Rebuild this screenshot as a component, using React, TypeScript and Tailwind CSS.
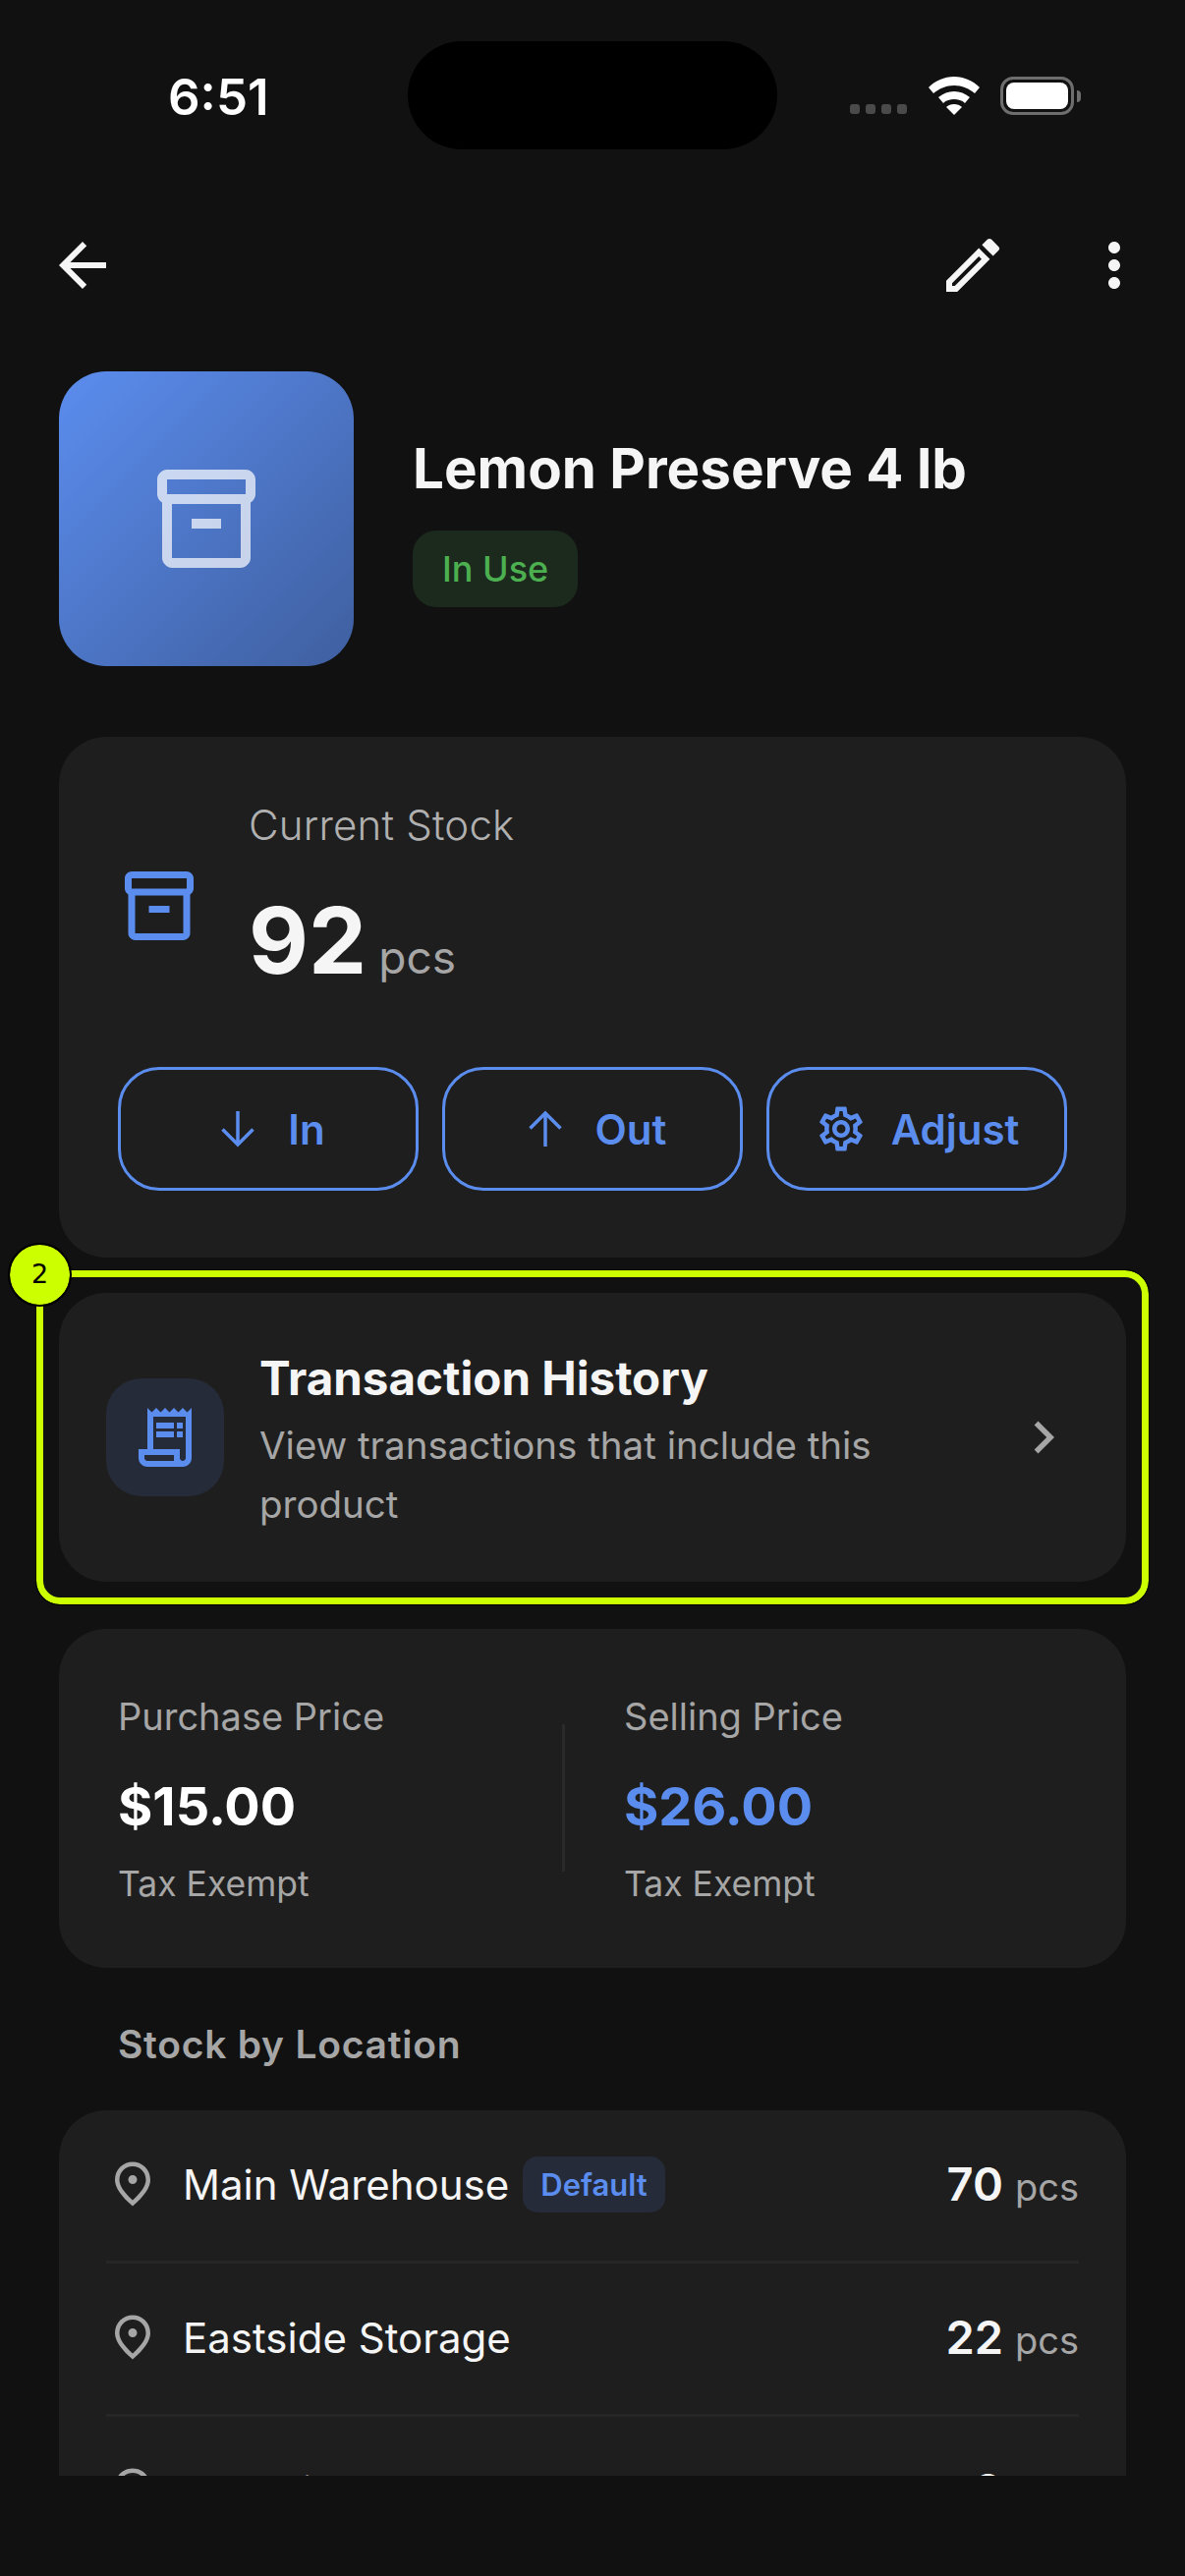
import { MdArrowBack, MdChevronRight, MdMoreVert, MdOutlineEdit, MdOutlineInventory2, MdOutlinePlace, MdOutlineReceiptLong, MdOutlineSettings } from "react-icons/md"

const locations = [
  { name: "Main Warehouse", qty: 70, isDefault: true },
  { name: "Eastside Storage", qty: 22, isDefault: false },
  { name: "Westside Annex", qty: 0, isDefault: false },
]

function StatusBar() {
  return (
    <div className="relative h-[152px] shrink-0">
      <span className="absolute left-[171px] top-[70px] text-[51px] leading-[58px] font-semibold text-white">6:51</span>
      <div className="absolute left-[415px] top-[42px] h-[110px] w-[376px] rounded-[55px] bg-black" />
      <div className="absolute left-[865px] top-[106px] flex gap-[6px]">
        {[0, 1, 2, 3].map((i) => (
          <span key={i} className="h-[10px] w-[10px] rounded-[3px] bg-[#4a4a4a]" />
        ))}
      </div>
      <svg className="absolute left-[945px] top-[78px]" width="52" height="39" viewBox="0 0 52 39" fill="#fff">
        <path d="M26 0C16 0 7 4 0 11l5 6c6-5 13-8 21-8s15 3 21 8l5-6C45 4 36 0 26 0z" />
        <path d="M26 15c-6 0-11 2-16 6l5 6c3-3 7-4 11-4s8 1 11 4l5-6c-5-4-10-6-16-6z" />
        <path d="M26 28c-3 0-6 1-8 3l8 8 8-8c-2-2-5-3-8-3z" />
      </svg>
      <div className="absolute left-[1018px] top-[78px] flex h-[39px] w-[75px] items-center justify-center rounded-[13px] border-[3px] border-[#6e6e6e]">
        <div className="h-[27px] w-[63px] rounded-[8px] bg-white" />
      </div>
      <div className="absolute left-[1096px] top-[92px] h-[12px] w-[4px] rounded-r-full bg-[#6e6e6e]" />
    </div>
  )
}

function ThinArrow({ up }: { up?: boolean }) {
  return (
    <svg width="54" height="54" viewBox="0 0 54 54" fill="none" stroke="currentColor" strokeWidth="3.5" className={up ? "rotate-180" : ""}>
      <path d="M27 9V43M11.5 27.5L27 43L42.5 27.5" />
    </svg>
  )
}

function ActionButton({ icon, label }: { icon: React.ReactNode; label: string }) {
  return (
    <button className="flex h-[126px] flex-1 items-center justify-center gap-[24px] rounded-[42px] border-[3px] border-[#5b8def] text-[42px] font-semibold text-[#5b8def]">
      {icon}
      {label}
    </button>
  )
}

function PriceColumn({ label, value, accent }: { label: string; value: string; accent?: boolean }) {
  return (
    <div className="flex flex-col">
      <span className="text-[38px] leading-[54px] text-[#a6a6a6]">{label}</span>
      <span className={`mt-[29px] text-[54px] leading-[72px] font-bold ${accent ? "text-[#5b8def]" : "text-white"}`}>{value}</span>
      <span className="mt-[19px] text-[35.5px] leading-[48px] text-[#a6a6a6]">Tax Exempt</span>
    </div>
  )
}

export default function App() {
  return (
    <div className="relative flex h-[2622px] w-[1206px] flex-col overflow-hidden bg-[#111111] font-['Inter',sans-serif] text-white">
      <StatusBar />

      {/* Top actions */}
      <div className="mt-[78px] flex h-[80px] shrink-0 items-center justify-between pl-[48px] pr-[36px]">
        <MdArrowBack size={72} className="text-[#f5f5f5]" />
        <div className="flex items-center gap-[72px]">
          <MdOutlineEdit size={72} className="text-[#f5f5f5]" />
          <MdMoreVert size={72} className="text-[#f5f5f5]" />
        </div>
      </div>

      {/* Scrolling content */}
      <div className="mt-[-4px] flex h-[2214px] flex-col overflow-hidden px-[60px] pt-[72px]">
        <div className="flex items-center gap-[60px]">
          <div className="flex h-[300px] w-[300px] shrink-0 items-center justify-center rounded-[48px] bg-gradient-to-br from-[#5b8def] to-[#3f5f9f]">
            <MdOutlineInventory2 size={120} className="text-white/70" />
          </div>
          <div className="flex flex-col items-start pt-[6px]">
            <h1 className="text-[56.5px] leading-[66px] font-bold text-[#f5f5f5]">Lemon Preserve 4 lb</h1>
            <span className="mt-[30px] rounded-[24px] bg-[#1c2a1e] px-[30px] py-[15px] text-[36px] leading-[48px] font-medium text-[#4caf50]">In Use</span>
          </div>
        </div>

        {/* Stock */}
        <div className="mt-[72px] flex h-[530px] shrink-0 flex-col rounded-[48px] bg-[#1e1e1e] px-[60px] pt-[60px]">
          <div className="flex items-center gap-[49px]">
            <MdOutlineInventory2 size={84} className="mt-[22px] shrink-0 text-[#5b8def]" />
            <div className="flex flex-col">
              <span className="text-[42px] leading-[60px] font-light tracking-[0.2px] text-[#b0b0b0]">Current Stock</span>
              <div className="mt-[33px] flex items-baseline gap-[12px]">
                <span className="text-[94px] leading-[108px] font-bold text-[#f5f5f5]">92</span>
                <span className="text-[46px] text-[#a6a6a6]">pcs</span>
              </div>
            </div>
          </div>
          <div className="mt-[75px] flex gap-[24px]">
            <ActionButton icon={<ThinArrow />} label="In" />
            <ActionButton icon={<ThinArrow up />} label="Out" />
            <ActionButton icon={<MdOutlineSettings size={54} />} label="Adjust" />
          </div>
        </div>

        {/* Transaction history */}
        <div className="mt-[36px] flex h-[294px] shrink-0 items-center rounded-[48px] bg-[#1e1e1e] pl-[48px] pr-[51px]">
          <div className="flex h-[120px] w-[120px] shrink-0 items-center justify-center rounded-[36px] bg-[#252b38]">
            <MdOutlineReceiptLong size={72} className="text-[#5b8def]" />
          </div>
          <div className="ml-[36px] flex-1 pt-[8px]">
            <div className="text-[47.5px] leading-[60px] font-bold text-[#f5f5f5]">Transaction History</div>
            <div className="mt-[8px] w-[640px] text-[38.5px] leading-[60px] text-[#a6a6a6]">View transactions that include this product</div>
          </div>
          <MdChevronRight size={66} className="text-[#a6a6a6]" />
        </div>

        {/* Prices */}
        <div className="mt-[48px] flex h-[345px] shrink-0 items-start rounded-[48px] bg-[#1e1e1e] px-[60px] pt-[62px]">
          <div className="flex-1">
            <PriceColumn label="Purchase Price" value="$15.00" />
          </div>
          <div className="mt-[35px] mr-[60px] h-[150px] w-[3px] bg-[#2a2a2a]" />
          <div className="w-[451px]">
            <PriceColumn label="Selling Price" value="$26.00" accent />
          </div>
        </div>

        <h2 className="mt-[48px] pl-[60px] text-[39px] leading-[60px] font-semibold tracking-[0.75px] text-[#a6a6a6]">Stock by Location</h2>

        {/* Locations */}
        <div className="mt-[37px] shrink-0 rounded-t-[48px] bg-[#1e1e1e] px-[48px]">
          {locations.map((loc) => (
            <div key={loc.name} className="flex h-[156px] items-center border-b-[3px] border-[#262626] pb-[3px]">
              <MdOutlinePlace size={54} className="shrink-0 text-[#a6a6a6]" />
              <span className="ml-[24px] text-[42px] text-[#f5f5f5]">{loc.name}</span>
              {loc.isDefault && (
                <span className="ml-[14px] rounded-[15px] bg-[#252b38] px-[18px] py-[9px] text-[31px] leading-[39px] font-semibold text-[#5b8def]">Default</span>
              )}
              <div className="ml-auto flex items-baseline gap-[12px]">
                <span className="text-[47px] font-semibold text-[#f5f5f5]">{loc.qty}</span>
                <span className="text-[38px] text-[#a6a6a6]">pcs</span>
              </div>
            </div>
          ))}
        </div>
      </div>

      {/* Annotation overlay */}
      <div className="absolute left-[37px] top-[1293px] h-[340px] w-[1132px] rounded-[24px] border-[7px] border-[#ccff00] outline-1 outline-black" />
      <div className="absolute left-[10px] top-[1267px] flex h-[61px] w-[61px] items-center justify-center rounded-full bg-[#ccff00] font-['DejaVu_Sans',sans-serif] text-[27px] text-black outline-2 outline-black">2</div>
    </div>
  )
}
